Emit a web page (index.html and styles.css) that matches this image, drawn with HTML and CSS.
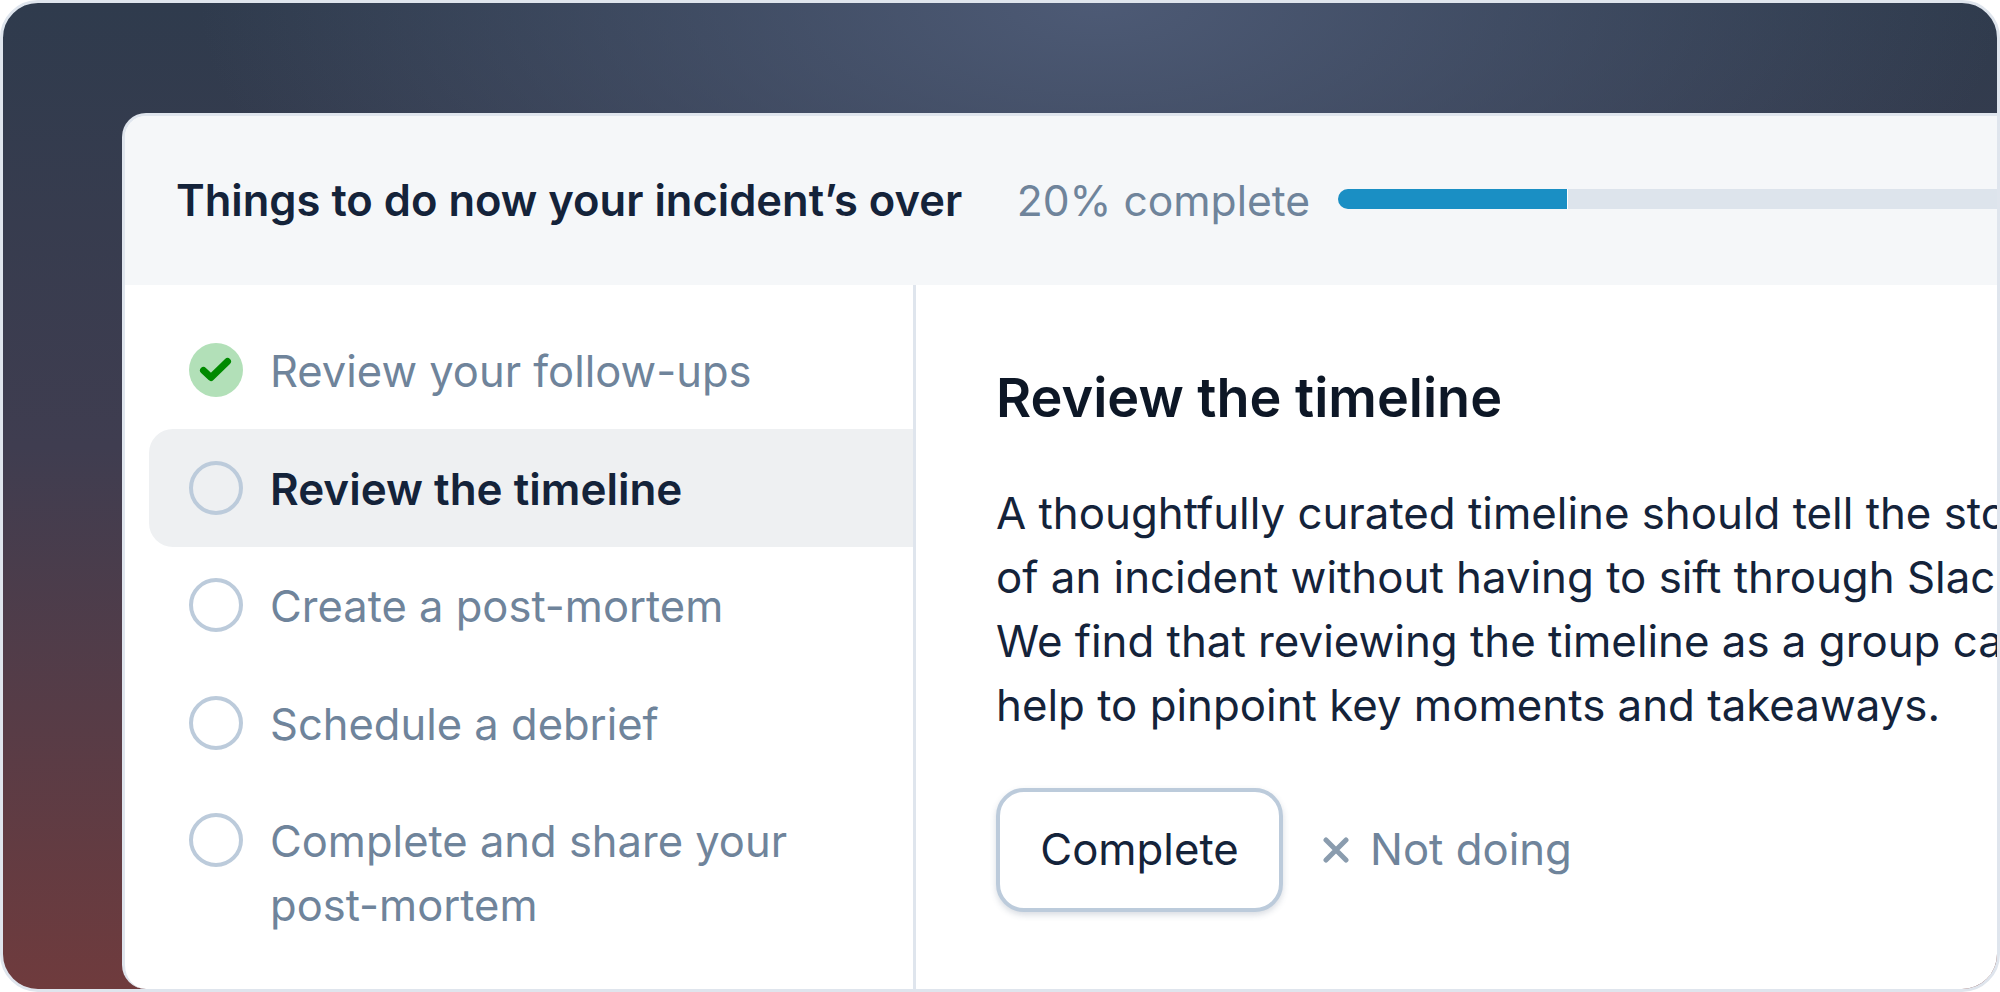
FILE: index.html
```html
<!DOCTYPE html>
<html>
<head>
    <title>Post-incident tasks</title>
    <link rel="stylesheet" href="styles.css">
</head>
<body>
    <div class="frame">
        <div class="card">
            <div class="card-header">
                <h1>Things to do now your incident’s over</h1>
                <span class="progress-label">20% complete</span>
                <div class="progress-track">
                    <div class="progress-fill"></div>
                </div>
            </div>

            <div class="card-body">
                <ul class="task-list">
                    <li class="task">
                        <span class="task-check done">
                            <svg viewBox="0 0 54 54" width="54" height="54">
                                <path d="M14.5 27.5 L22 34.5 L38.5 18.5" fill="none" stroke="#008a00" stroke-width="7" stroke-linecap="round" stroke-linejoin="round"/>
                            </svg>
                        </span>
                        <span class="task-name">Review your follow-ups</span>
                    </li>
                    <li class="task active">
                        <span class="task-check"></span>
                        <span class="task-name">Review the timeline</span>
                    </li>
                    <li class="task">
                        <span class="task-check"></span>
                        <span class="task-name">Create a post-mortem</span>
                    </li>
                    <li class="task">
                        <span class="task-check"></span>
                        <span class="task-name">Schedule a debrief</span>
                    </li>
                    <li class="task">
                        <span class="task-check"></span>
                        <span class="task-name">Complete and share your<br>post-mortem</span>
                    </li>
                </ul>

                <div class="task-detail">
                    <h2>Review the timeline</h2>
                    <p>A thoughtfully curated timeline should tell the story<br>of an incident without having to sift through Slack.<br>We find that reviewing the timeline as a group can<br>help to pinpoint key moments and takeaways.</p>
                    <div class="actions">
                        <button class="complete-btn">Complete</button>
                        <span class="not-doing">
                            <svg viewBox="0 0 26 26" width="26" height="26">
                                <path d="M3 3 L23 23 M23 3 L3 23" fill="none" stroke="#8a9cae" stroke-width="5" stroke-linecap="round"/>
                            </svg>
                            Not doing
                        </span>
                    </div>
                </div>
            </div>
        </div>
    </div>
</body>
</html>
```

FILE: styles.css
```css
html, body {
    margin: 0;
    height: 100%;
}
body {
    font-family: Inter, "Noto Sans", sans-serif;
    background-color: #fff;
}
.frame {
    box-sizing: border-box;
    height: 992px;
    width: 2000px;
    padding: 110px 0 0 119px;
    border: 3px solid #dfe5ed;
    border-radius: 38px;
    overflow: hidden;
    background:
        radial-gradient(ellipse 900px 400px at 55% 0, #4d5a75 0%, rgba(77, 90, 117, 0) 100%),
        linear-gradient(to bottom, #2f3b4d 0%, #3f3d50 45%, #6f3b3d 100%);
}
.card {
    box-sizing: border-box;
    height: 876px;
    display: flex;
    flex-direction: column;
    background-color: #fff;
    border-left: 3px solid #dfe5ed;
    border-top: 3px solid #dfe5ed;
    border-radius: 24px 0 0 24px;
    overflow: hidden;
}
.card-header {
    display: flex;
    align-items: center;
    height: 169px;
    flex-shrink: 0;
    padding-left: 51px;
    background-color: #f5f7f9;
}
.card-header h1 {
    margin: 0 0 2px;
    font-size: 43.5px;
    font-weight: 600;
    color: #14233a;
    white-space: nowrap;
}
.progress-label {
    margin-left: 54.5px;
    font-size: 42.6px;
    color: #6f849b;
    white-space: nowrap;
}
.progress-track {
    flex: 1;
    height: 20px;
    margin-left: 27.5px;
    margin-bottom: 3px;
    background-color: #dde4ec;
    border-radius: 10px 0 0 10px;
}
.progress-fill {
    width: 230px;
    height: 100%;
    background-color: #1a8fc4;
    border-radius: 10px 0 0 10px;
    border-right: 1px solid #fff;
    box-sizing: border-box;
}
.card-body {
    display: flex;
    flex: 1;
    min-height: 0;
}
.task-list {
    width: 791px;
    flex-shrink: 0;
    box-sizing: border-box;
    margin: 0;
    padding: 26.5px 0 0 24px;
    list-style: none;
    border-right: 3px solid #dfe5ed;
}
.task {
    display: flex;
    gap: 27px;
    padding: 27.75px 0 25.75px 40px;
    font-size: 43.5px;
    line-height: 64px;
    color: #6f849b;
    white-space: nowrap;
}
.task.active {
    background-color: #eef0f2;
    border-radius: 24px 0 0 24px;
    color: #14233a;
    font-size: 44px;
    font-weight: 600;
}
.task-check {
    box-sizing: border-box;
    width: 54px;
    height: 54px;
    margin-top: 4px;
    flex-shrink: 0;
    border: 4px solid #bccbdb;
    border-radius: 50%;
}
.task-check.done {
    border: none;
    background-color: #b2e0b8;
}
.task-check svg {
    display: block;
}
.task-detail {
    flex: 1;
    min-width: 0;
    padding: 80px 0 0 80px;
    color: #14233a;
    white-space: nowrap;
    overflow: hidden;
}
.task-detail h2 {
    margin: 0;
    font-size: 54px;
    font-weight: 600;
    color: #0d1726;
}
.task-detail p {
    margin: 52px 0 0;
    font-size: 43.8px;
    line-height: 64px;
}
.actions {
    display: flex;
    align-items: center;
    gap: 40px;
    margin-top: 49.5px;
}
.complete-btn {
    width: 287px;
    height: 124px;
    padding: 0;
    font-family: inherit;
    font-size: 43.7px;
    color: #14233a;
    background-color: #fff;
    border: 4px solid #bccbdb;
    border-radius: 28px;
    box-shadow: 0 3px 6px rgba(60, 80, 110, 0.2);
}
.not-doing {
    display: flex;
    align-items: center;
    gap: 21px;
    font-size: 43.7px;
    color: #6f849b;
}
```
